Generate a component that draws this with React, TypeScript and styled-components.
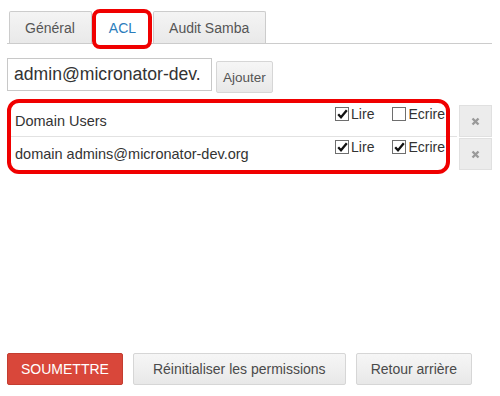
import React from 'react';
import styled, { createGlobalStyle, css } from 'styled-components';

const GlobalStyle = createGlobalStyle`
  html, body {
    margin: 0;
    padding: 0;
    background: #ffffff;
    font-family: "Liberation Sans", Arial, sans-serif;
  }
`;

const Page = styled.div`
  width: 500px;
  height: 396px;
  box-sizing: border-box;
  padding: 11px 8px 11px 7px;
  display: flex;
  flex-direction: column;
`;

const TabBar = styled.div`
  display: flex;
  padding-left: 2px;
  border-bottom: 1px solid #cccccc;
  height: 32px;
`;

const Tab = styled.div<{ $active?: boolean }>`
  position: relative;
  box-sizing: border-box;
  height: 33px;
  padding: 0 16px 0 15px;
  margin-right: 2px;
  display: flex;
  align-items: center;
  font-size: 14px;
  border: 1px solid #cccccc;
  border-bottom: none;
  border-radius: 2px 2px 0 0;
  ${(p) =>
    p.$active
      ? css`
          background: #ffffff;
          color: #2b7dbc;
          padding: 0 14px;
        `
      : css`
          background: linear-gradient(#f4f4f4, #e9e9e9);
          color: #555555;
          height: 32px;
        `}
`;

const Highlight = styled.span<{ $radius: number }>`
  position: absolute;
  box-sizing: border-box;
  border: 4px solid #f00000;
  border-radius: ${(p) => p.$radius}px;
  pointer-events: none;
`;

const TabHighlight = styled(Highlight)`
  left: -3px;
  top: -3px;
  width: 60px;
  height: 40px;
`;

const FormRow = styled.div`
  display: flex;
  align-items: flex-start;
  margin-top: 14px;
`;

const TextInput = styled.div`
  box-sizing: border-box;
  width: 205px;
  height: 33px;
  border: 1px solid #c8c8c8;
  padding: 0 5px 0 6px;
  font-size: 17.6px;
  color: #333333;
  display: flex;
  align-items: center;
  white-space: nowrap;
  overflow: hidden;
`;

const GrayButton = styled.div<{ $pad?: number }>`
  box-sizing: border-box;
  height: 32px;
  padding: 0 ${(p) => p.$pad ?? 14}px;
  display: flex;
  align-items: center;
  justify-content: center;
  font-size: 14px;
  color: #4a4a4a;
  background: linear-gradient(#f6f6f6, #e8e8e8);
  border: 1px solid #d6d6d6;
  border-radius: 2px;
  white-space: nowrap;
`;

const AddButton = styled(GrayButton)`
  margin-left: 4px;
  margin-top: 3px;
  font-size: 13.5px;
  color: #555555;
`;

const Table = styled.div`
  position: relative;
  margin-top: 12px;
  width: 485px;
`;

const TableHighlight = styled(Highlight)`
  left: 0;
  top: -6px;
  width: 443px;
  height: 75px;
`;

const Row = styled.div`
  display: flex;
`;

const RowBody = styled.div<{ $divider?: boolean }>`
  flex: 1;
  box-sizing: border-box;
  height: 32px;
  display: flex;
  align-items: center;
  padding: 0 12px 0 8px;
  font-size: 14.5px;
  color: #333333;
  border-bottom: 1px solid ${(p) => (p.$divider ? '#e2e2e2' : 'transparent')};
`;

const Perms = styled.div`
  margin-left: auto;
  align-self: flex-start;
  padding-top: 1px;
  display: flex;
  gap: 18px;
`;

const Perm = styled.label`
  display: flex;
  align-items: flex-start;
  gap: 2px;
  font-size: 14px;
  color: #333333;
  line-height: 17px;
  white-space: nowrap;
`;

const Box = styled.span`
  box-sizing: border-box;
  width: 14px;
  height: 14px;
  margin-top: 1px;
  border: 1px solid #6e6e6e;
  background: #ffffff;
  display: flex;
  align-items: center;
  justify-content: center;
`;

const DeleteButton = styled.div`
  box-sizing: border-box;
  width: 33px;
  height: 32px;
  margin-left: 2px;
  margin-bottom: 1px;
  background: #ececec;
  border: 1px solid #e0e0e0;
  display: flex;
  align-items: center;
  justify-content: center;
`;

const Footer = styled.div`
  margin-top: auto;
  display: flex;
  gap: 10px;
`;

const SubmitButton = styled.div`
  box-sizing: border-box;
  height: 32px;
  padding: 0 13px;
  display: flex;
  align-items: center;
  font-size: 14px;
  color: #ffffff;
  background: #d9473a;
  border: 1px solid #c43d30;
  border-radius: 2px;
`;

const Check = () => (
  <svg width="11" height="10" viewBox="0 0 11 10">
    <path d="M1.2 5.2 L4 8.2 L9.8 1.2" fill="none" stroke="#111" strokeWidth="2.3" />
  </svg>
);

const Cross = () => (
  <svg width="9" height="9" viewBox="0 0 9 9">
    <path d="M1.5 1.5 L7.5 7.5 M7.5 1.5 L1.5 7.5" stroke="#9a9a9a" strokeWidth="2.4" />
  </svg>
);

const Checkbox = ({ checked, label }: { checked: boolean; label: string }) => (
  <Perm>
    <Box>{checked && <Check />}</Box>
    {label}
  </Perm>
);

const acl = [
  { name: 'Domain Users', read: true, write: false },
  { name: 'domain admins@micronator-dev.org', read: true, write: true },
];

export default function App() {
  return (
    <Page>
      <GlobalStyle />
      <TabBar>
        <Tab>Général</Tab>
        <Tab $active>
          ACL
          <TabHighlight $radius={8} />
        </Tab>
        <Tab>Audit Samba</Tab>
      </TabBar>

      <FormRow>
        <TextInput>admin@micronator-dev.</TextInput>
        <AddButton $pad={6}>Ajouter</AddButton>
      </FormRow>

      <Table>
        {acl.map((entry, i) => (
          <Row key={entry.name}>
            <RowBody $divider={i < acl.length - 1}>
              {entry.name}
              <Perms>
                <Checkbox checked={entry.read} label="Lire" />
                <Checkbox checked={entry.write} label="Ecrire" />
              </Perms>
            </RowBody>
            <DeleteButton>
              <Cross />
            </DeleteButton>
          </Row>
        ))}
        <TableHighlight $radius={12} />
      </Table>

      <Footer>
        <SubmitButton>SOUMETTRE</SubmitButton>
        <GrayButton $pad={19}>Réinitialiser les permissions</GrayButton>
        <GrayButton>Retour arrière</GrayButton>
      </Footer>
    </Page>
  );
}
